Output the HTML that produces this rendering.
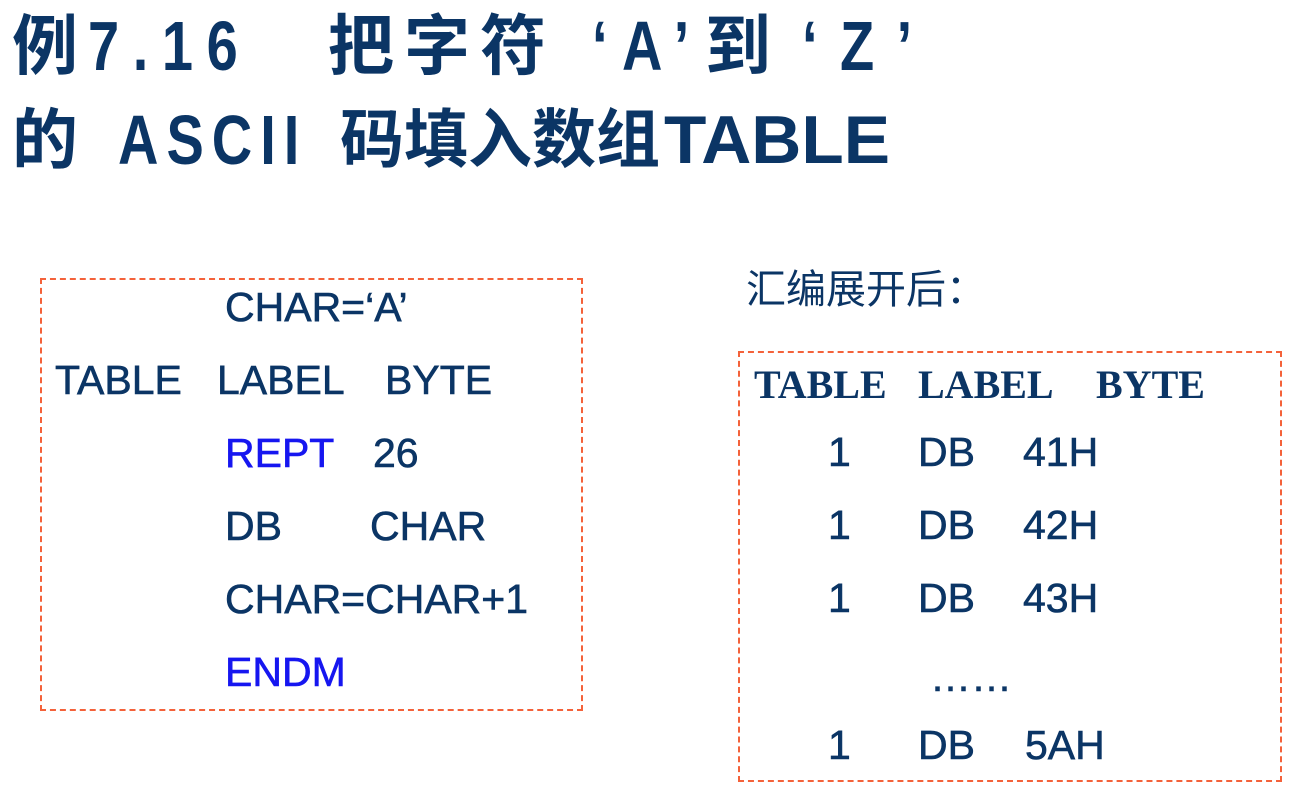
<!DOCTYPE html>
<html><head><meta charset="utf-8"><style>
body{margin:0;width:1298px;height:807px;background:#fff;position:relative;overflow:hidden;color:#0b3565}
.t{position:absolute;font-family:"Liberation Sans","Noto Sans CJK SC",sans-serif;font-weight:bold;font-size:66px;line-height:80px;white-space:pre}
.n{transform:scaleX(0.8);transform-origin:left}
.c{position:absolute;font-family:"Liberation Sans","Noto Sans CJK SC",sans-serif;font-size:41px;line-height:50px;white-space:pre;-webkit-text-stroke:0.6px #0b3565}
.s{position:absolute;font-family:"Liberation Serif",serif;font-weight:bold;font-size:40px;line-height:50px;white-space:pre}
.b{color:#1616f0;-webkit-text-stroke:0.6px #1616f0}
.box{position:absolute;border:2px dashed #f4623a}
</style></head><body>
<div class="t" style="left:12px;top:6px">例</div>
<div class="t n" style="left:88px;top:6px;letter-spacing:17px;font-size:70px">7.16</div>
<div class="t" style="left:328px;top:6px;letter-spacing:10px">把字符</div>
<div class="t n" style="left:592px;top:6px;letter-spacing:18px;font-size:70px">‘A’</div>
<div class="t" style="left:705px;top:6px">到</div>
<div class="t n" style="left:802px;top:6px;letter-spacing:28px;font-size:70px">‘Z’</div>
<div class="t" style="left:12px;top:100px">的</div>
<div class="t n" style="left:118px;top:100px;letter-spacing:10px;font-size:70px">ASCII</div>
<div class="t" style="left:340px;top:100px;font-size:64px">码填入数组</div>
<div class="t" style="left:664px;top:100px;transform:scaleX(1.02);transform-origin:left;font-size:68px">TABLE</div>

<div class="box" style="left:40px;top:278px;width:539px;height:429px"></div>
<div class="c" style="left:225px;top:282px">CHAR=‘A’</div>
<div class="c" style="left:55px;top:355px">TABLE</div>
<div class="c" style="left:217px;top:355px">LABEL</div>
<div class="c" style="left:385px;top:355px">BYTE</div>
<div class="c b" style="left:225px;top:428px">REPT</div>
<div class="c" style="left:373px;top:428px">26</div>
<div class="c" style="left:225px;top:501px">DB</div>
<div class="c" style="left:370px;top:501px">CHAR</div>
<div class="c" style="left:225px;top:574px">CHAR=CHAR+1</div>
<div class="c b" style="left:225px;top:647px">ENDM</div>

<div class="c" style="left:746px;top:265px;-webkit-text-stroke:0;font-size:40px">汇编展开后：</div>
<div class="box" style="left:738px;top:351px;width:540px;height:427px"></div>
<div class="s" style="left:754px;top:360px">TABLE</div>
<div class="s" style="left:918px;top:360px">LABEL</div>
<div class="s" style="left:1096px;top:360px">BYTE</div>
<div class="c" style="left:828px;top:427px">1</div><div class="c" style="left:918px;top:427px">DB</div><div class="c" style="left:1023px;top:427px">41H</div>
<div class="c" style="left:828px;top:500px">1</div><div class="c" style="left:918px;top:500px">DB</div><div class="c" style="left:1023px;top:500px">42H</div>
<div class="c" style="left:828px;top:573px">1</div><div class="c" style="left:918px;top:573px">DB</div><div class="c" style="left:1023px;top:573px">43H</div>
<div class="c" style="left:930px;top:652px">……</div>
<div class="c" style="left:828px;top:720px">1</div><div class="c" style="left:918px;top:720px">DB</div><div class="c" style="left:1025px;top:720px">5AH</div>
</body></html>
